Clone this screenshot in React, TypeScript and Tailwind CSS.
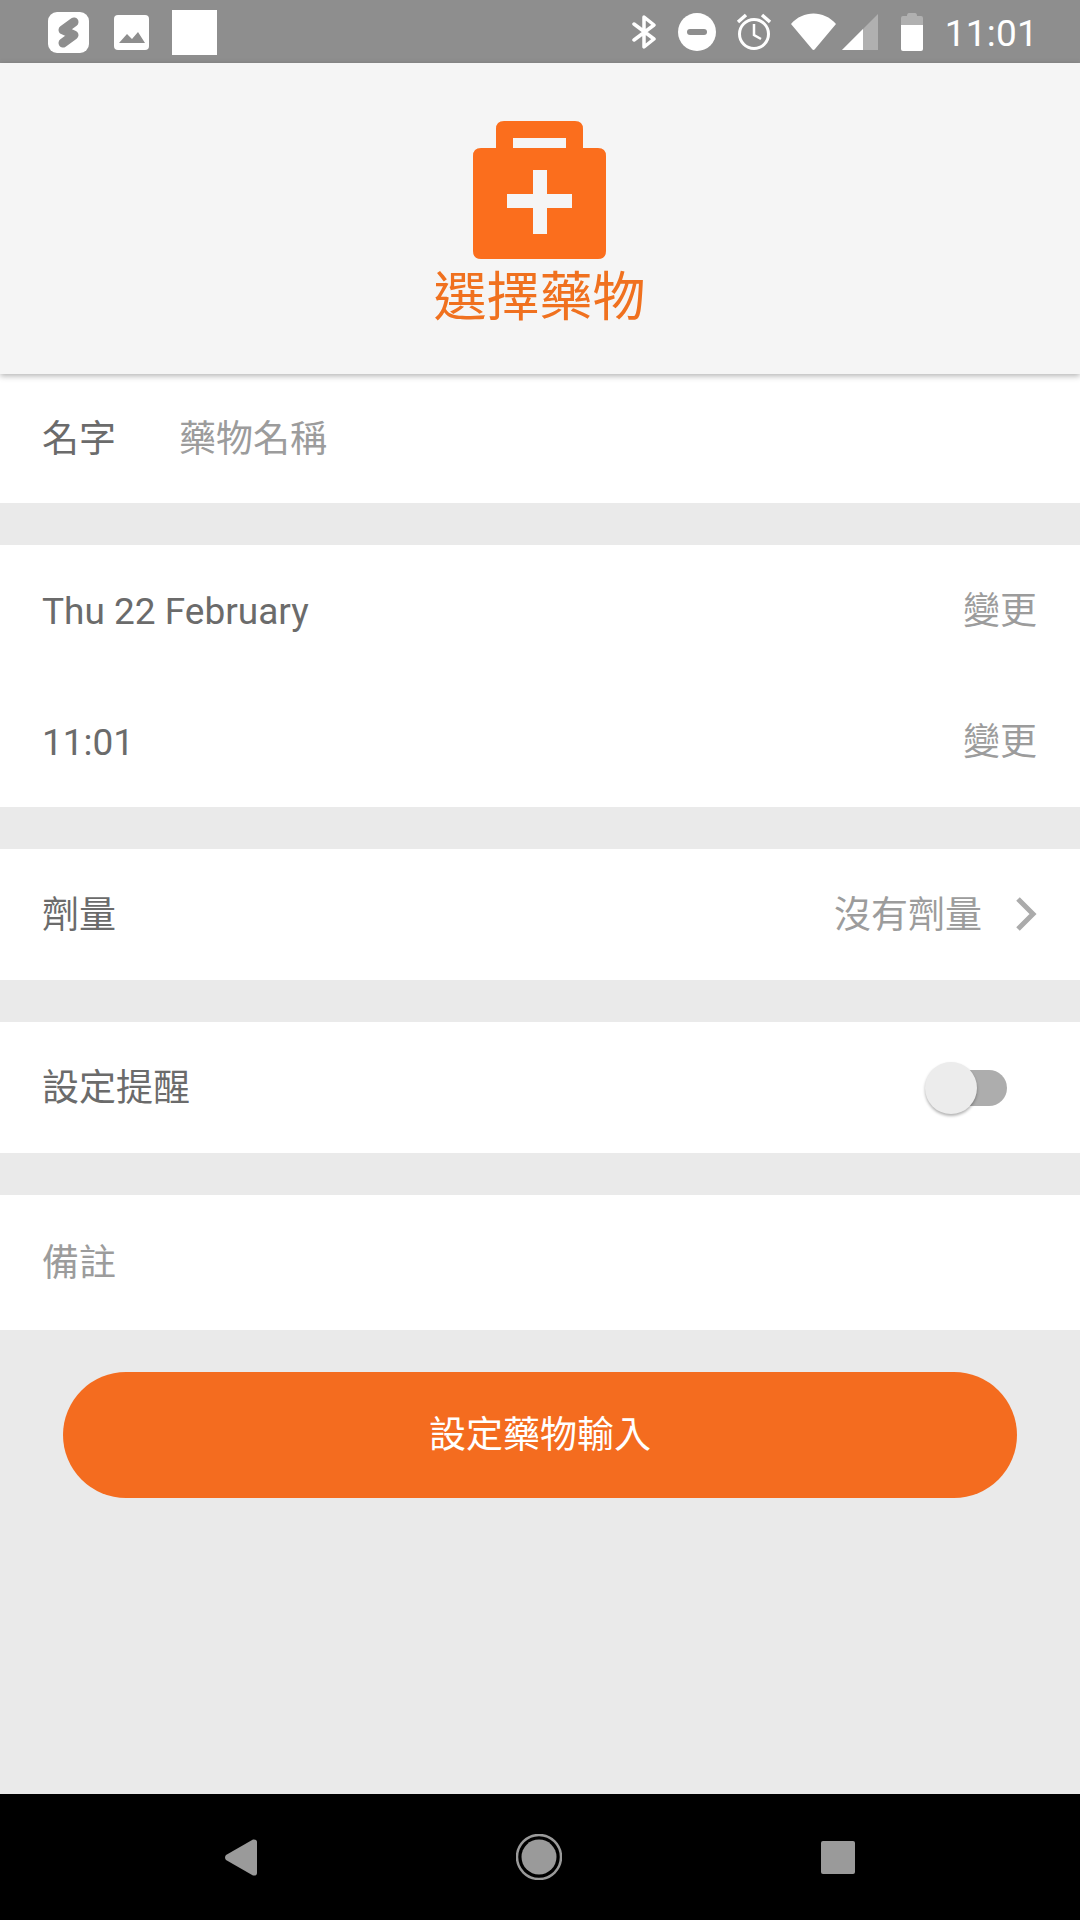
const cjk = "font-['Roboto','Noto_Sans_CJK_TC',sans-serif]";

function StatusBar() {
  return (
    <div className="flex h-[63px] items-center justify-between bg-[#8e8e8e] pl-[48px] pr-[42px] pt-[1px]">
      <div className="flex items-center">
        <svg width="41" height="41" viewBox="0 0 41 41">
          <rect width="41" height="41" rx="9" fill="#fff" />
          <path d="M26 10 L15 18 L26 23 L15 31" fill="none" stroke="#8e8e8e" strokeWidth="9" strokeLinecap="round" strokeLinejoin="round" />
        </svg>
        <svg className="ml-[25px]" width="35" height="35" viewBox="0 0 35 35">
          <rect width="35" height="35" rx="4" fill="#fff" />
          <path d="M5 28 L13 19 L18 24 L24 17 L31 28 Z" fill="#8e8e8e" />
        </svg>
        <div className="ml-[23px] h-[45px] w-[45px] bg-white" />
      </div>
      <div className="flex items-center">
        <svg width="24" height="34" viewBox="0 0 24 34" fill="none" stroke="#fff" strokeWidth="3.5" strokeLinejoin="round" strokeLinecap="round">
          <path d="M2 9 L22 24 L12 32 V2 L22 10 L2 25" />
        </svg>
        <svg className="ml-[22px]" width="38" height="38" viewBox="0 0 38 38">
          <circle cx="19" cy="19" r="19" fill="#fff" />
          <rect x="9" y="16" width="20" height="6" rx="3" fill="#8e8e8e" />
        </svg>
        <svg className="ml-[20px]" width="36" height="38" viewBox="0 0 36 38" fill="none" stroke="#fff" strokeWidth="3">
          <circle cx="18" cy="21" r="14.5" />
          <path d="M18 11 V22 L25 26" strokeWidth="2.5" />
          <path d="M2 9 L10 2 M34 9 L26 2" strokeWidth="3.5" />
        </svg>
        <svg className="ml-[19px]" width="45" height="38" viewBox="0 0 45 38">
          <path d="M0 11 C12 -3 33 -3 45 11 L24 36 Q22.5 38 21 36 Z" fill="#fff" />
        </svg>
        <svg className="ml-[6px]" width="36" height="36" viewBox="0 0 36 36">
          <path d="M36 0 V36 H0 Z" fill="#b0b0b0" />
          <path d="M21 15 V36 H0 Z" fill="#fff" />
        </svg>
        <svg className="ml-[23px]" width="22" height="38" viewBox="0 0 22 38">
          <path d="M6 3 Q6 0 8 0 H14 Q16 0 16 3 H20 Q22 3 22 5 V12 H0 V5 Q0 3 2 3 Z" fill="#b0b0b0" />
          <path d="M0 12 H22 V36 Q22 38 20 38 H2 Q0 38 0 36 Z" fill="#fff" />
        </svg>
        <span className="ml-[22px] pt-[2px] font-['Roboto',sans-serif] text-[37px] leading-none text-white tracking-[0.2px]">11:01</span>
      </div>
    </div>
  );
}

function Header() {
  return (
    <div className="relative z-10 flex h-[311px] flex-col items-center bg-[#f5f5f5] pr-[1px] pt-[58px] shadow-[0_2px_6px_rgba(0,0,0,0.3)]">
      <svg width="133" height="138" viewBox="0 0 133 138">
        <path
          fillRule="evenodd"
          fill="#fb6e1d"
          d="M31 0 H102 Q110 0 110 8 V27 H125 Q133 27 133 35 V130 Q133 138 125 138 H8 Q0 138 0 130 V35 Q0 27 8 27 H23 V8 Q23 0 31 0 Z M40 17 V27 H93 V17 Z M60 49 V73 H34 V87 H60 V113 H74 V87 H99 V73 H74 V49 Z"
        />
      </svg>
      <div className={`${cjk} mt-[9px] text-[53px] leading-[60px] text-[#f0711f]`}>選擇藥物</div>
    </div>
  );
}

function Toggle() {
  return (
    <div className="relative mr-[30px] h-[36px] w-[62px] rounded-full bg-[#adadad]">
      <div className="absolute left-[-20px] top-[-8px] h-[52px] w-[52px] rounded-full bg-[#ececec] shadow-[0_2px_3px_rgba(0,0,0,0.3)]" />
    </div>
  );
}

export default function App() {
  return (
    <div className={`${cjk} flex h-[1920px] w-[1080px] flex-col bg-[#eaeaea] text-[37px]`}>
      <StatusBar />
      <Header />

      <div className="flex h-[129px] items-center bg-white pl-[42px] pr-[43px] pt-[2px]">
        <span className="w-[137px] text-[#6b6b6b]">名字</span>
        <span className="text-[#9c9c9c]">藥物名稱</span>
      </div>

      <div className="mt-[42px] flex h-[262px] flex-col bg-white pl-[42px] pr-[43px]">
        <div className="flex h-[131px] items-center justify-between pt-[3px]">
          <span className="text-[#6b6b6b]">Thu 22 February</span>
          <span className="text-[#9c9c9c]">變更</span>
        </div>
        <div className="flex h-[131px] items-center justify-between pt-[2px]">
          <span className="text-[#6b6b6b]">11:01</span>
          <span className="text-[#9c9c9c]">變更</span>
        </div>
      </div>

      <div className="mt-[42px] flex h-[131px] items-center justify-between bg-white pl-[42px] pr-[43px] pt-[2px]">
        <span className="text-[#6b6b6b]">劑量</span>
        <div className="flex items-center">
          <span className="text-[#9c9c9c]">沒有劑量</span>
          <svg className="mb-[4px] ml-[33px]" width="22" height="36" viewBox="0 0 22 36" fill="none" stroke="#ababab" strokeWidth="5">
            <path d="M3 3 L18 18 L3 33" />
          </svg>
        </div>
      </div>

      <div className="mt-[42px] flex h-[131px] items-center justify-between bg-white pl-[42px] pr-[43px]">
        <span className="pt-[2px] text-[#6b6b6b]">設定提醒</span>
        <Toggle />
      </div>

      <div className="mt-[42px] flex h-[135px] items-center bg-white pl-[42px] pr-[43px] pt-[2px]">
        <span className="text-[#9c9c9c]">備註</span>
      </div>

      <button className="mx-[63px] mt-[42px] flex h-[126px] items-center justify-center rounded-full bg-[#f46c1f] pt-[2px] text-white">
        設定藥物輸入
      </button>

      <div className="mt-auto flex h-[126px] items-center bg-black">
        <svg className="ml-[225px]" width="32" height="37" viewBox="0 0 32 37">
          <path d="M1 16 L28 0.5 Q32 0 32 3 V34 Q32 37 28 36.5 L1 21 Q-1 18.5 1 16 Z" fill="#9a9a9a" />
        </svg>
        <svg className="ml-[259px]" width="46" height="46" viewBox="0 0 46 46">
          <circle cx="23" cy="23" r="22" fill="none" stroke="#9a9a9a" strokeWidth="2.5" />
          <circle cx="23" cy="23" r="17.5" fill="#9a9a9a" />
        </svg>
        <div className="ml-[259px] h-[33px] w-[34px] rounded-[2px] bg-[#9a9a9a]" />
      </div>
    </div>
  );
}
